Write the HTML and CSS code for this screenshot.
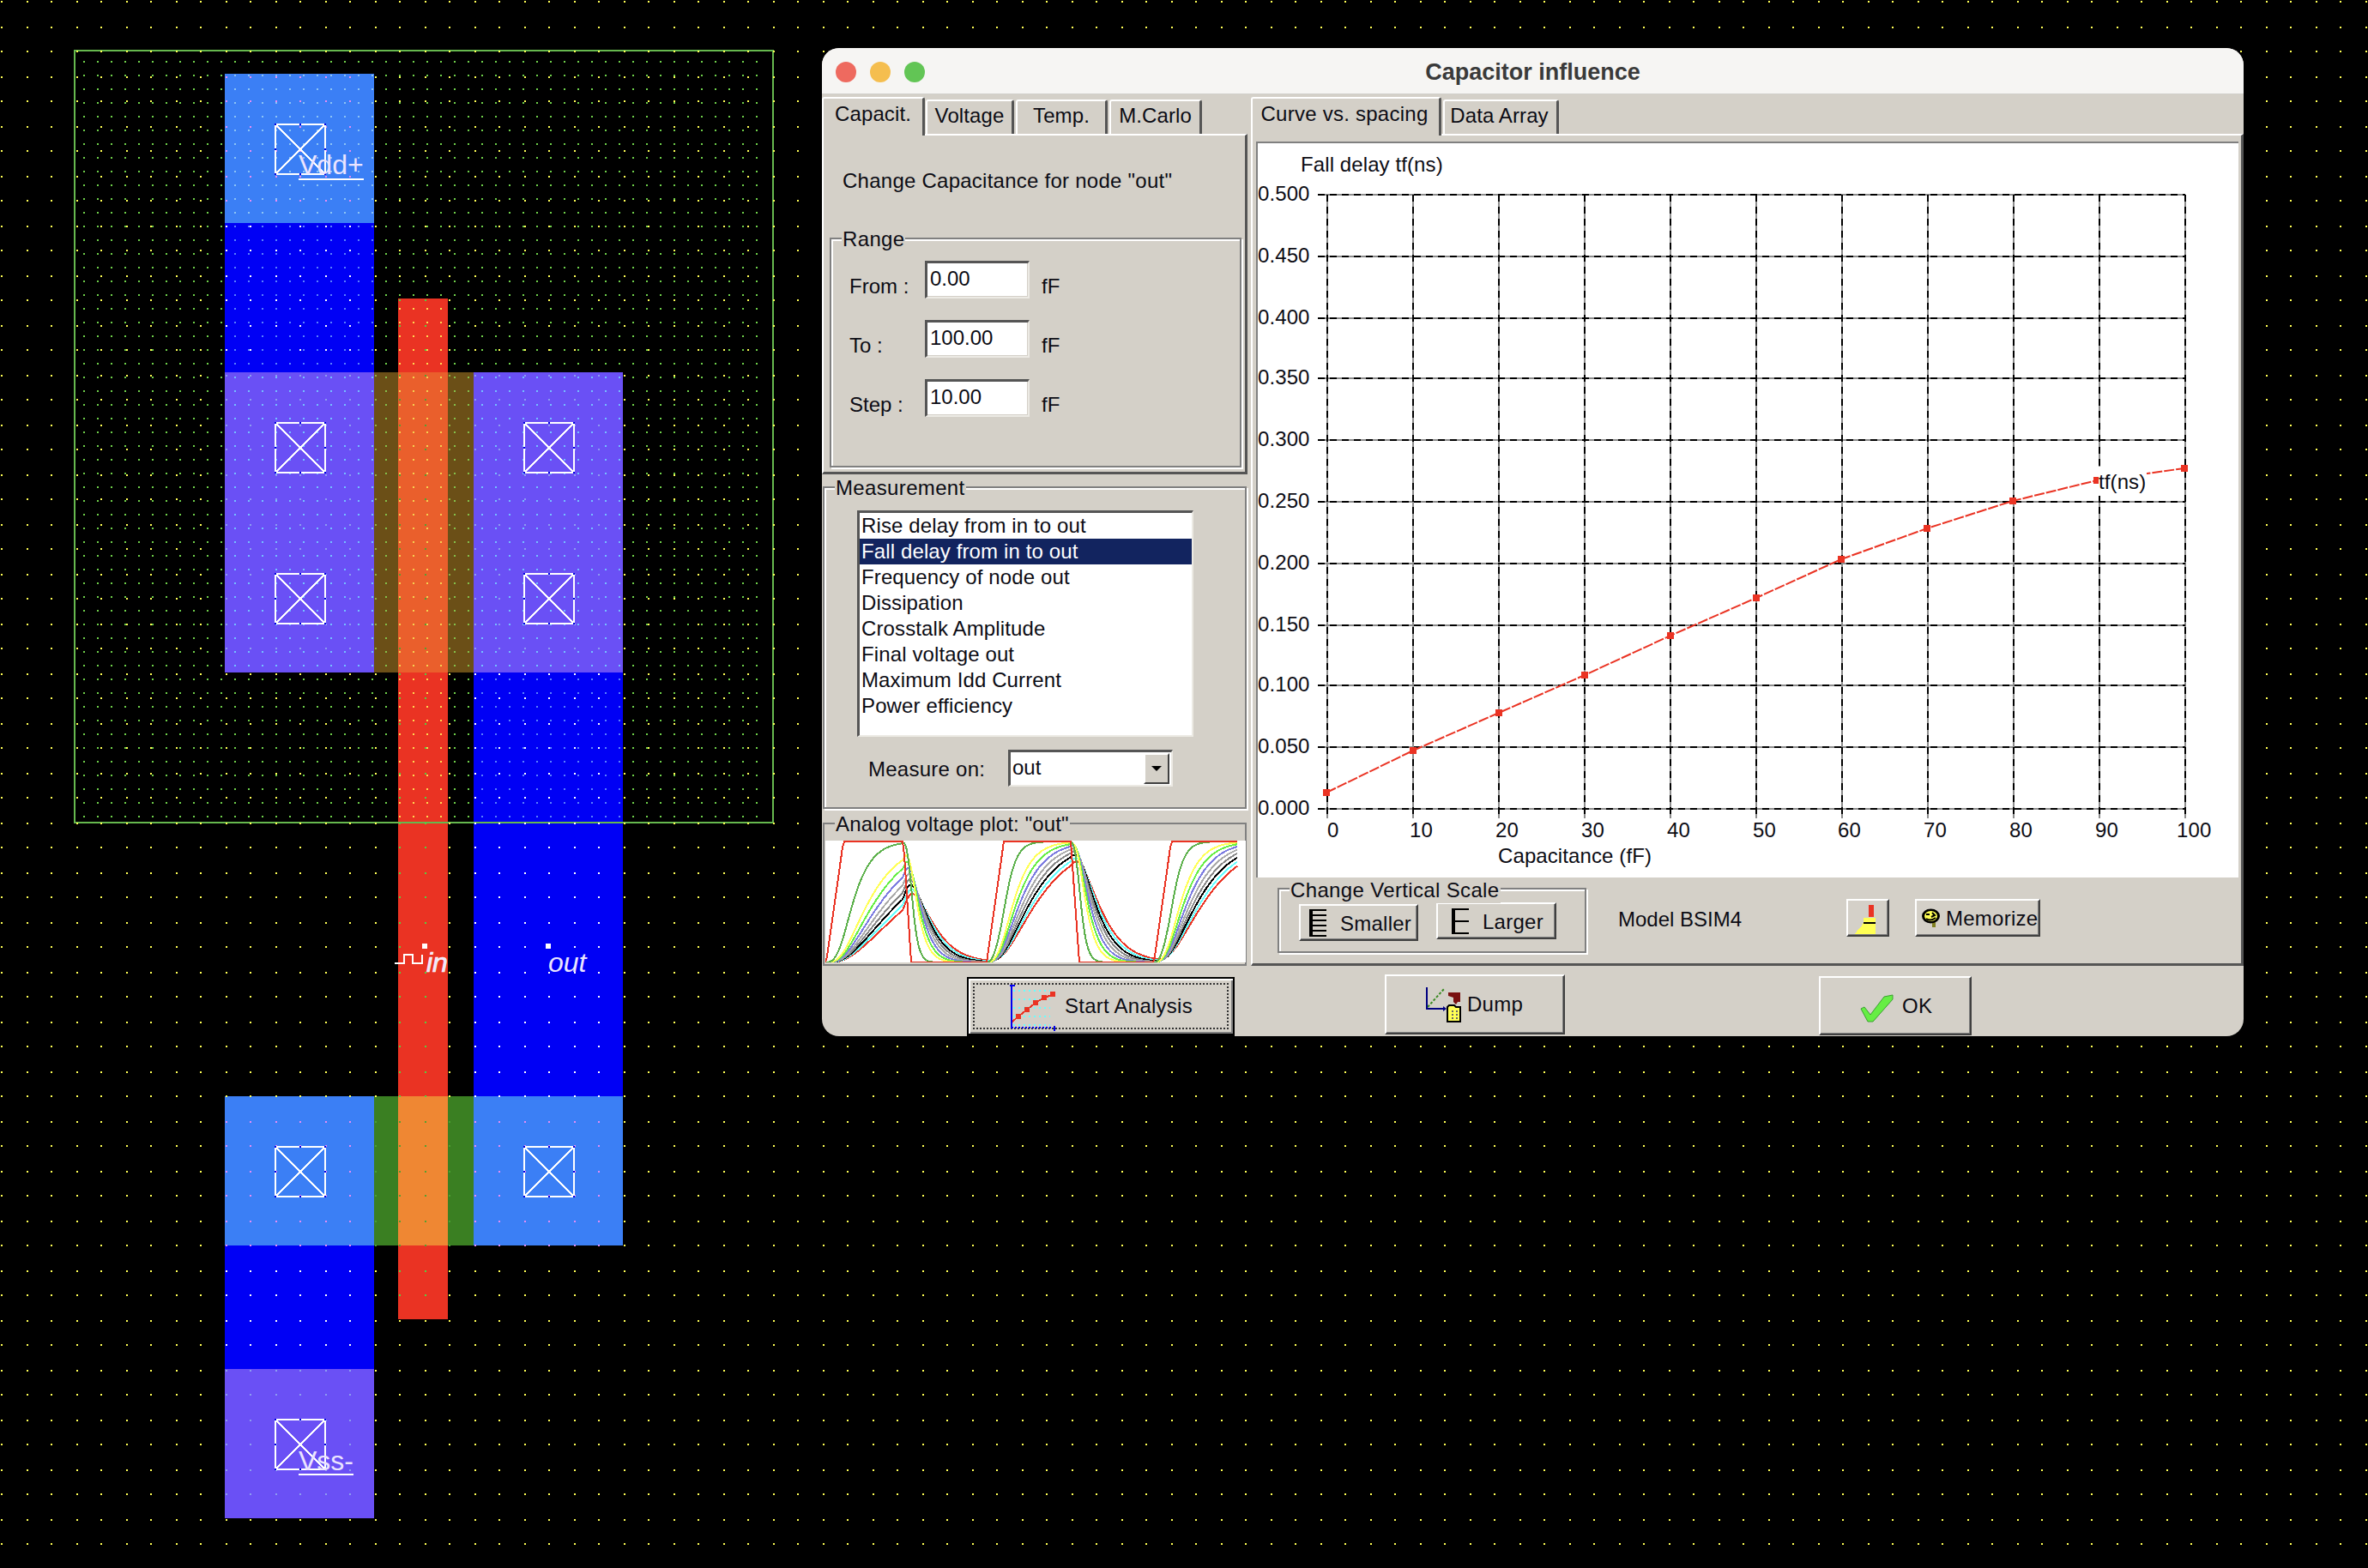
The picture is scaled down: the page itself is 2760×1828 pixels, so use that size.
FILE: index.html
```html
<!DOCTYPE html>
<html>
<head>
  <title>Capacitor influence</title>
  <link rel="stylesheet" href="styles.css">
</head>
<body>
  <!-- Layout editor canvas -->
  <svg class="canvas" width="2760" height="1828" viewBox="0 0 2760 1828">
    <defs>
      <g id="contact">
        <path class="contact-box" d="M1 1H59V59H1ZM2 2L58 58M58 2L2 58"/>
        <path class="contact-ticks" d="M0 0h2v2H0ZM29 0h2v2h-2ZM58 0h2v2h-2ZM0 29h2v2H0ZM58 29h2v2h-2ZM0 58h2v2H0ZM29 58h2v2h-2ZM58 58h2v2h-2Z"/>
      </g>
    </defs>
    <g id="layers">
      <rect class="poly" x="464" y="348" width="58" height="1190"/>
      <rect class="metal" x="262" y="260" width="174" height="174"/>
      <rect class="metal" x="552" y="784" width="174" height="494"/>
      <rect class="metal" x="262" y="1452" width="174" height="144"/>
      <rect class="active-n" x="262" y="86" width="174" height="174"/>
      <rect class="active-n" x="262" y="1278" width="174" height="174"/>
      <rect class="active-n" x="552" y="1278" width="174" height="174"/>
      <rect class="active-p" x="262" y="434" width="174" height="350"/>
      <rect class="active-p" x="552" y="434" width="174" height="350"/>
      <rect class="active-p" x="262" y="1596" width="174" height="174"/>
      <rect class="gate-p" x="436" y="434" width="116" height="350"/>
      <rect class="gate-n" x="436" y="1278" width="116" height="174"/>
      <rect class="gate-poly-p" x="464" y="434" width="58" height="350"/>
      <rect class="gate-poly-n" x="464" y="1278" width="58" height="174"/>
    </g>
    <rect class="well" x="87" y="59" width="814" height="900"/>
    <g id="dots"></g>
    <use href="#contact" x="320" y="144"/>
    <use href="#contact" x="320" y="492"/>
    <use href="#contact" x="610" y="492"/>
    <use href="#contact" x="320" y="668"/>
    <use href="#contact" x="610" y="668"/>
    <use href="#contact" x="320" y="1336"/>
    <use href="#contact" x="610" y="1336"/>
    <use href="#contact" x="320" y="1654"/>
    <text class="node-label" x="348" y="203">Vdd+</text>
    <path class="node-mark" d="M348 209H424M348 1719H412"/>
    <text class="node-label" x="348" y="1714">Vss-</text>
    <path class="pulse" d="M460 1123H471V1113H481V1123H492V1113"/>
    <rect class="node-pin" x="492" y="1100" width="6" height="6"/>
    <text class="node-label italic heavy" x="497" y="1133">in</text>
    <rect class="node-pin" x="636" y="1100" width="6" height="6"/>
    <text class="node-label italic" x="639" y="1133">out</text>
  </svg>

  <div class="window">
    <div class="titlebar">
      <div class="lights">
        <span class="light red"></span>
        <span class="light yellow"></span>
        <span class="light green"></span>
      </div>
      <span class="title">Capacitor influence</span>
    </div>

    <div class="main">
      <div class="left">
        <div class="tabs">
          <div class="tab active tab-capacit">Capacit.</div>
          <div class="tab tab-voltage">Voltage</div>
          <div class="tab tab-temp">Temp.</div>
          <div class="tab tab-carlo">M.Carlo</div>
        </div>
        <div class="page page-left">
          <p class="node-title">Change Capacitance for node "out"</p>
          <div class="group group-range">
            <span class="group-label">Range</span>
            <div class="range-grid">
              <span class="range-label">From :</span>
              <div class="field sunken">0.00</div>
              <span class="range-unit">fF</span>
              <span class="range-label">To :</span>
              <div class="field sunken">100.00</div>
              <span class="range-unit">fF</span>
              <span class="range-label">Step :</span>
              <div class="field sunken">10.00</div>
              <span class="range-unit">fF</span>
            </div>
          </div>
        </div>

        <div class="group group-measure">
          <span class="group-label">Measurement</span>
          <div class="list sunken">
            <div class="list-row">Rise delay from in to out</div>
            <div class="list-row selected">Fall delay from in to out</div>
            <div class="list-row">Frequency of node out</div>
            <div class="list-row">Dissipation</div>
            <div class="list-row">Crosstalk Amplitude</div>
            <div class="list-row">Final voltage out</div>
            <div class="list-row">Maximum Idd Current</div>
            <div class="list-row">Power efficiency</div>
          </div>
          <div class="measure-on">
            <span class="measure-label">Measure on:</span>
            <div class="combo sunken">
              <span class="combo-text">out</span>
              <span class="combo-btn"><span class="combo-arrow"></span></span>
            </div>
          </div>
        </div>

        <div class="group group-analog">
          <span class="group-label">Analog voltage plot: "out"</span>
          <svg id="waves" class="waves" width="490" height="142" viewBox="962 980 490 142"></svg>
        </div>
      </div>

      <div class="right">
        <div class="tabs">
          <div class="tab active tab-curve">Curve vs. spacing</div>
          <div class="tab tab-array">Data Array</div>
        </div>
        <div class="page page-right">
          <div class="plot">
            <svg class="chart" width="1143" height="856" viewBox="1466 167 1143 856">
              <defs>
                <path id="grid" d="M1536 227H2547M1536 299H2547M1536 371H2547M1536 441H2547M1536 513H2547M1536 585H2547M1536 657H2547M1536 729H2547M1536 799H2547M1536 871H2547M1536 943H2547M1547 227V954M1647 227V954M1747 227V954M1847 227V954M1947 227V954M2047 227V954M2147 227V954M2247 227V954M2347 227V954M2447 227V954M2547 227V954"/>
              </defs>
              <use href="#grid" class="grid-base"/>
              <use href="#grid" class="grid-dash"/>
              <polyline class="curve" points="1546,924 1647,875 1747,831 1847,787 1947,741 2047,697 2146,652 2246,616 2346,584 2444,560 2546,546"/>
              <path class="curve-marks" d="M1542 920h8v8h-8ZM1643 871h8v8h-8ZM1743 827h8v8h-8ZM1843 783h8v8h-8ZM1943 737h8v8h-8ZM2043 693h8v8h-8ZM2142 648h8v8h-8ZM2242 612h8v8h-8ZM2342 580h8v8h-8ZM2440 556h8v8h-8ZM2542 542h8v8h-8Z"/>
              <text x="1516" y="200">Fall delay tf(ns)</text>
              <text x="1466" y="234">0.500</text>
              <text x="1466" y="306">0.450</text>
              <text x="1466" y="378">0.400</text>
              <text x="1466" y="448">0.350</text>
              <text x="1466" y="520">0.300</text>
              <text x="1466" y="592">0.250</text>
              <text x="1466" y="664">0.200</text>
              <text x="1466" y="736">0.150</text>
              <text x="1466" y="806">0.100</text>
              <text x="1466" y="878">0.050</text>
              <text x="1466" y="950">0.000</text>
              <text x="1547" y="976">0</text>
              <text x="1643" y="976">10</text>
              <text x="1743" y="976">20</text>
              <text x="1843" y="976">30</text>
              <text x="1943" y="976">40</text>
              <text x="2043" y="976">50</text>
              <text x="2142" y="976">60</text>
              <text x="2242" y="976">70</text>
              <text x="2342" y="976">80</text>
              <text x="2442" y="976">90</text>
              <text x="2537" y="976">100</text>
              <text x="1746" y="1006">Capacitance (fF)</text>
              <rect class="curve-tag" x="2446" y="544" width="56" height="34"/>
              <text x="2446" y="570">tf(ns)</text>
            </svg>
          </div>
          <div class="controls">
            <div class="group group-scale">
              <span class="group-label">Change Vertical Scale</span>
              <button class="btn btn-smaller">
                <svg width="20" height="32" viewBox="0 0 20 32"><path d="M0 0h4v32H0ZM0 0h20v2H0ZM0 6h20v2H0ZM0 12h20v2H0ZM0 18h20v2H0ZM0 24h20v2H0ZM0 30h20v2H0Z"/></svg>
                <span class="btn-text-low">Smaller</span>
              </button>
              <button class="btn btn-larger">
                <svg width="20" height="30" viewBox="0 0 20 30"><path d="M0 0h4v30H0ZM0 0h20v2H0ZM0 14h20v2H0ZM0 28h20v2H0Z"/></svg>
                <span class="btn-text-low">Larger</span>
              </button>
            </div>
            <span class="model">Model BSIM4</span>
            <button class="btn btn-broom">
              <svg width="24" height="34" viewBox="0 0 24 34" shape-rendering="crispEdges">
                <path fill="#ea3323" d="M16 0h6v14h-6Z"/>
                <path fill="#ffff55" d="M10 15h14v19H0l4-6 4-4 2-4Z"/>
                <path fill="#000" d="M10 20h14v2H10Z"/>
              </svg>
            </button>
            <button class="btn btn-memorize">
              <svg width="22" height="22" viewBox="0 0 22 22">
                <path fill="#808020" d="M12 15h4v7h-4Z"/>
                <ellipse cx="10.5" cy="9" rx="10.5" ry="8.5" fill="#000"/>
                <ellipse cx="10.5" cy="9" rx="7.5" ry="6" fill="#ffff55"/>
                <path fill="none" stroke="#000" stroke-width="2" d="M5 7h4M12 5l3 3-4 2M5 12c3 2 7 2 11-1"/>
              </svg>
              <span class="btn-text-low">Memorize</span>
            </button>
          </div>
        </div>
      </div>
    </div>

    <div class="footer">
      <button class="btn btn-start">
        <span class="focus-ring">
          <svg width="56" height="56" viewBox="0 0 56 56" shape-rendering="crispEdges">
            <path class="start-cyan" d="M4 8H47M4 18H47M4 28H47M4 38H47M4 48H47"/>
            <path fill="#0000f0" d="M1 1h2v51H1ZM0 1h6v2H0ZM51 49h2v6h-2Z"/>
            <path class="start-base" d="M2 51H50"/>
            <polyline class="start-red" points="3,44 10,38 20,30 30,22 40,16 52,12"/>
            <path fill="#ea3323" d="M7 35h6v6H7ZM17 27h6v6h-6ZM27 19h6v6h-6ZM37 13h6v6h-6ZM47 9h6v6h-6Z"/>
          </svg>
          <span>Start Analysis</span>
        </span>
      </button>
      <button class="btn btn-dump">
        <svg width="41" height="41" viewBox="0 0 41 41">
          <path class="dump-line" d="M2 23L21 2"/>
          <path fill="#000080" d="M0 0h2v26H0ZM0 24h20v2H0ZM20 22l4 3-4 3Z"/>
          <path fill="#7a1010" d="M26 6h14v11h-3l-2 3-3-3v-5l-6-2Z"/>
          <path fill="#ffff55" stroke="#000" stroke-width="2" d="M25 23l2-2h6l2 2h5v17H25Z"/>
          <path fill="#666" d="M30 27h2v2h-2ZM35 27h2v2h-2ZM30 31h2v2h-2ZM35 31h2v2h-2ZM30 35h2v2h-2ZM35 35h2v2h-2Z"/>
        </svg>
        <span>Dump</span>
      </button>
      <button class="btn btn-ok">
        <svg width="39" height="33" viewBox="0 0 39 33">
          <path fill="#66ee44" stroke="#3aa030" d="M1 17l4-2 7 9L28 3l10-2v5L15 32H9Z"/>
        </svg>
        <span>OK</span>
      </button>
    </div>
  </div>

  <script src="script.js"></script>
</body>
</html>
```

FILE: styles.css
```css
* {
  box-sizing: border-box;
}
body {
  margin: 0;
  background-color: #000;
  width: 2760px;
  height: 1828px;
  overflow: hidden;
  position: relative;
  font-family: "Liberation Sans", Arial, sans-serif;
  font-size: 24px;
  line-height: 30px;
  color: #0c0c14;
}

/* layout canvas */
.canvas {
  display: block;
}
.poly { fill: #ea3323; }
.metal { fill: #0000f5; }
.active-n { fill: #3b7ff5; }
.active-p { fill: #6a50f5; }
.gate-p { fill: #6b4f17; }
.gate-n { fill: #3a7f22; }
.gate-poly-p { fill: #ea5f2c; }
.gate-poly-n { fill: #ef8733; }
.well {
  fill: none;
  stroke: #66b84e;
  stroke-width: 2;
}
.contact-box {
  fill: none;
  stroke: #fff;
  stroke-width: 2;
  shape-rendering: crispEdges;
}
.contact-ticks { fill: #0000e0; }
.node-label {
  font-size: 32px;
  fill: #ebe4ff;
}
.italic { font-style: italic; }
.heavy {
  stroke: #fff;
  stroke-width: 0.7;
}
.node-mark, .pulse {
  fill: none;
  stroke: #fff;
  stroke-width: 2;
  shape-rendering: crispEdges;
}
.node-pin { fill: #fff; }

/* window */
.window {
  position: absolute;
  left: 958px;
  top: 56px;
  width: 1657px;
  height: 1152px;
  background-color: #d4d0c8;
  border-radius: 20px;
  overflow: hidden;
  display: flex;
  flex-direction: column;
}
.titlebar {
  height: 54px;
  flex: none;
  padding-top: 2px;
  background-color: #f6f5f3;
  border-bottom: 1px solid #d0d0cc;
  display: flex;
  align-items: center;
  justify-content: center;
  position: relative;
}
.title {
  font-size: 27px;
  font-weight: bold;
  color: #3a3a3a;
}
.lights {
  position: absolute;
  left: 16px;
  top: 16px;
  display: flex;
  gap: 16px;
}
.light {
  width: 24px;
  height: 24px;
  border-radius: 50%;
}
.light.red { background-color: #ee6a5f; }
.light.yellow { background-color: #f5be4f; }
.light.green { background-color: #62c555; }

.main {
  display: flex;
  height: 1016px;
  flex: none;
}
.left {
  width: 500px;
  flex: none;
}
.right {
  flex: 1;
}

/* tabs */
.tabs {
  height: 46px;
  display: flex;
  align-items: flex-start;
  position: relative;
  z-index: 1;
}
.tab {
  height: 40px;
  margin-top: 6px;
  border-top: 2px solid #fff;
  border-left: 2px solid #fff;
  border-right: 3px solid #555;
  border-top-left-radius: 3px;
  border-top-right-radius: 3px;
  text-align: center;
  line-height: 33px;
  margin-right: 2px;
  letter-spacing: 0.1px;
}
.tab.active {
  height: 45px;
  margin-top: 3px;
  background-color: #d4d0c8;
  line-height: 35px;
}
.tab-capacit { width: 120px; margin-right: 1px; }
.tab-voltage { width: 103px; }
.tab-temp { width: 107px; }
.tab-carlo { width: 108px; }
.tab-curve { width: 222px; letter-spacing: 0.25px; padding-right: 3px; }
.tab-array { width: 135px; padding-right: 3px; }

.page {
  border-top: 2px solid #fff;
  border-left: 2px solid #fff;
  border-right: 3px solid #555;
  border-bottom: 3px solid #555;
}
.page-left {
  width: 496px;
  height: 397px;
  padding: 38px 0 0 7px;
}
.page-right {
  width: 1157px;
  height: 970px;
  padding: 7px 0 0 4px;
}
.node-title {
  margin: 0 0 0 15px;
  height: 81px;
  letter-spacing: 0.25px;
}

/* etched group boxes */
.group {
  position: relative;
  border: 2px solid #808080;
  box-shadow: 2px 2px 0 #fff, inset 2px 2px 0 #fff;
}
.group-label {
  position: absolute;
  left: 12px;
  top: -15px;
  padding: 0 1px;
  background-color: #d4d0c8;
  white-space: nowrap;
  letter-spacing: 0.35px;
}
.group-range {
  width: 480px;
  height: 268px;
  padding: 25px 0 0 21px;
}
.range-grid {
  display: grid;
  grid-template-columns: 88px 122px auto;
  grid-auto-rows: 44px;
  row-gap: 25px;
}
.range-label {
  padding-top: 15px;
}
.range-unit {
  padding-top: 15px;
  margin-left: 14px;
}

.sunken {
  background-color: #fff;
  border-style: solid;
  border-width: 3px 2px 2px 3px;
  border-color: #555 #eceae4 #eceae4 #555;
}
.field {
  line-height: 35px;
  padding-left: 3px;
  box-shadow: inset -1px -1px 0 #d4d0c8;
}

.group-measure {
  width: 494px;
  height: 376px;
  margin: 14px 0 0 1px;
  padding: 26px 0 0 38px;
}
.list {
  width: 392px;
  height: 264px;
}
.list-row {
  height: 30px;
  line-height: 30px;
  padding-left: 2px;
  letter-spacing: 0.12px;
}
.list-row.selected {
  background-color: #12245f;
  color: #fff;
}
.measure-on {
  display: flex;
  align-items: center;
  margin-top: 15px;
  margin-left: 13px;
}
.measure-label {
  width: 163px;
  padding-top: 2px;
  letter-spacing: 0.25px;
}
.combo {
  width: 192px;
  height: 43px;
  display: flex;
  justify-content: space-between;
  padding-right: 2px;
}
.combo-text {
  padding-left: 2px;
  line-height: 36px;
}
.combo-btn {
  width: 30px;
  height: 36px;
  margin-top: 1px;
  background-color: #d4d0c8;
  border: 2px solid;
  border-color: #fff #404040 #404040 #fff;
  display: flex;
  align-items: center;
  justify-content: center;
}
.combo-arrow {
  border-style: solid;
  border-width: 6px 6px 0 6px;
  border-color: #000 transparent transparent transparent;
}

.group-analog {
  width: 494px;
  height: 167px;
  margin: 16px 0 0 1px;
  padding: 19px 0 0 1px;
  box-shadow: none;
}
.group-analog .group-label {
  letter-spacing: 0.15px;
}
.waves {
  display: block;
  background-color: #fff;
  overflow: hidden;
}
.waves polyline {
  fill: none;
  stroke-width: 2;
  shape-rendering: crispEdges;
}

/* right side */
.plot {
  width: 1145px;
  height: 858px;
  background-color: #fff;
  border-top: 2px solid #808080;
  border-left: 2px solid #808080;
}
.chart {
  display: block;
  font-size: 24px;
  letter-spacing: 0.1px;
}
.chart text {
  fill: #0c0c14;
}
.grid-base {
  fill: none;
  stroke: #8c8c8c;
  stroke-width: 2;
  shape-rendering: crispEdges;
}
.grid-dash {
  fill: none;
  stroke: #000;
  stroke-width: 2;
  stroke-dasharray: 8 6;
  shape-rendering: crispEdges;
}
.curve {
  fill: none;
  stroke: #ea3323;
  stroke-width: 2;
  stroke-dasharray: 12 2;
}
.curve-marks {
  fill: #ea3323;
}
.curve-tag {
  fill: #fff;
}
.controls {
  display: flex;
  align-items: flex-start;
  padding-left: 25px;
}
.group-scale {
  width: 360px;
  height: 76px;
  margin-top: 12px;
  padding: 15px 0 0 23px;
  display: flex;
  align-items: flex-start;
}
.group-scale .group-label {
  left: 12px;
  top: -14px;
}
.model {
  width: 266px;
  margin: 34px 0 0 37px;
}

/* buttons */
.btn {
  font: inherit;
  color: inherit;
  letter-spacing: 0.25px;
  background-color: #d4d0c8;
  padding: 0;
  border: 2px solid;
  border-color: #fff #404040 #404040 #fff;
  box-shadow: inset -1px -1px 0 #808080;
  display: flex;
  align-items: center;
}
.btn-text-low {
  padding-top: 2px;
}
.btn-smaller {
  width: 139px;
  height: 43px;
  margin-top: 2px;
  padding-left: 10px;
  gap: 16px;
}
.btn-larger {
  width: 140px;
  height: 43px;
  margin-left: 21px;
  padding-left: 16px;
  gap: 16px;
}
.btn-broom {
  width: 50px;
  height: 44px;
  margin-top: 25px;
  padding: 4px 0 0 8px;
}
.btn-memorize {
  width: 146px;
  height: 44px;
  margin: 25px 0 0 30px;
  padding-left: 6px;
  gap: 6px;
}
.footer {
  display: flex;
  align-items: flex-start;
  flex: 1;
}
.btn-start {
  width: 312px;
  height: 69px;
  margin: 13px 0 0 169px;
  border: 2px solid #000;
  border-bottom-width: 3px;
  box-shadow: inset 2px 2px 0 #fff, inset -2px -2px 0 #808080;
}
.focus-ring {
  flex: 1;
  height: 54px;
  margin: 0 5px;
  border: 2px dotted #333;
  display: flex;
  align-items: center;
  padding-left: 41px;
  gap: 8px;
}
.focus-ring svg {
  margin-top: 3px;
}
.start-cyan {
  fill: none;
  stroke: #66ffff;
  stroke-width: 2;
  stroke-dasharray: 2 4;
}
.start-base {
  fill: none;
  stroke: #0000f0;
  stroke-width: 2;
  stroke-dasharray: 2 2;
}
.start-red {
  fill: none;
  stroke: #ea3323;
  stroke-width: 2;
}
.btn-dump {
  width: 210px;
  height: 70px;
  margin: 10px 0 0 175px;
  padding-left: 46px;
  gap: 7px;
}
.dump-line {
  fill: none;
  stroke: #3a8a22;
  stroke-width: 2;
  stroke-dasharray: 3 2;
}
.btn-ok {
  width: 178px;
  height: 69px;
  margin: 12px 0 0 296px;
  padding-left: 46px;
  gap: 10px;
}
.btn-ok svg {
  margin-top: 6px;
}
```

FILE: script.js
```js
// Draw the editor grid dots and the analog plot traces

const SVG_NS = 'http://www.w3.org/2000/svg';

// [colour on the 29px lattice, colour on the 16px lattice]
const DOT_COLOURS = {
  none: ['#ffff55', '#6fd04a'],
  poly: ['#55d040', '#ffd850'],
  metal: ['#ffffff', '#5a80ff'],
  'active-n': ['#e48cf5', '#8cc4f5'],
  'active-p': ['#8c9cf0', '#74c0ff'],
  'gate-p': ['#8fb040', '#84c04a'],
  'gate-n': ['#4aa030', '#4aa030'],
  'gate-poly-p': ['#55a030', '#f5d050'],
  'gate-poly-n': ['#55a030', '#f5d050']
};

const layers = [...document.querySelectorAll('#layers rect')].reverse().map(r => ({
  name: r.getAttribute('class'),
  x: +r.getAttribute('x'),
  y: +r.getAttribute('y'),
  w: +r.getAttribute('width'),
  h: +r.getAttribute('height')
}));

function layerAt(x, y) {
  const hit = layers.find(l => x >= l.x && x < l.x + l.w && y >= l.y && y < l.y + l.h);
  return hit ? hit.name : 'none';
}

const dotPaths = {};
function addDot(x, y, lattice) {
  const fill = DOT_COLOURS[layerAt(x, y)][lattice];
  dotPaths[fill] = (dotPaths[fill] || '') + `M${x} ${y}h2v2h-2Z`;
}

for (let j = 0; 1 + 29 * j < 1828; j++) {
  for (let i = 0; 1 + 29 * i < 2760; i++) {
    addDot(1 + 2 * Math.ceil(14.5 * i), 1 + 2 * Math.ceil(14.5 * j), 0);
  }
}
for (let y = 71; y <= 951; y += 16) {
  for (let x = 97; x <= 881; x += 16) {
    addDot(x, y, 1);
  }
}

const dotGroup = document.getElementById('dots');
Object.keys(dotPaths).forEach(fill => {
  const path = document.createElementNS(SVG_NS, 'path');
  path.setAttribute('d', dotPaths[fill]);
  path.setAttribute('fill', fill);
  dotGroup.appendChild(path);
});

// Analog plot: the input edges filtered by a slower and slower load
const EDGES = [[963, 983, 1], [1053, 1062, 0], [1150, 1170, 1], [1248, 1258, 0], [1345, 1365, 1]];
const TRACES = [
  [25, '#ea3323'], [23, '#66ffff'], [21, '#000000'], [19, '#888888'], [17, '#aaaaaa'],
  [15, '#7b7be0'], [13, '#66ee44'], [11, '#ffff55'], [6, '#5bb04a'], [0, '#ea3323']
];

function inputAt(x) {
  let level = 0;
  for (const [start, end, to] of EDGES) {
    if (x >= end) level = to;
    else if (x >= start) return level + (to - level) * (x - start) / (end - start);
  }
  return level;
}

// The falling stretches settle faster than the rising ones
function speedAt(x) {
  if (x < 1053) return 0.23;
  if (x < 1150) return 0.75;
  if (x < 1248) return 0.42;
  if (x < 1345) return 0.7;
  return 0.42;
}

const waves = document.getElementById('waves');
TRACES.forEach(([tau, colour]) => {
  let a = 0, b = 0;
  const points = [];
  for (let x = 962; x <= 1442; x += 0.5) {
    const input = inputAt(x);
    if (tau === 0) {
      b = input;
    } else {
      const rate = speedAt(x) / tau;
      a += (input - a) * rate;
      b += (a - b) * rate;
    }
    if (x % 2 === 0) points.push(x + ',' + (1122 - b * 141).toFixed(1));
  }
  const line = document.createElementNS(SVG_NS, 'polyline');
  line.setAttribute('points', points.join(' '));
  line.setAttribute('stroke', colour);
  waves.appendChild(line);
});
```
